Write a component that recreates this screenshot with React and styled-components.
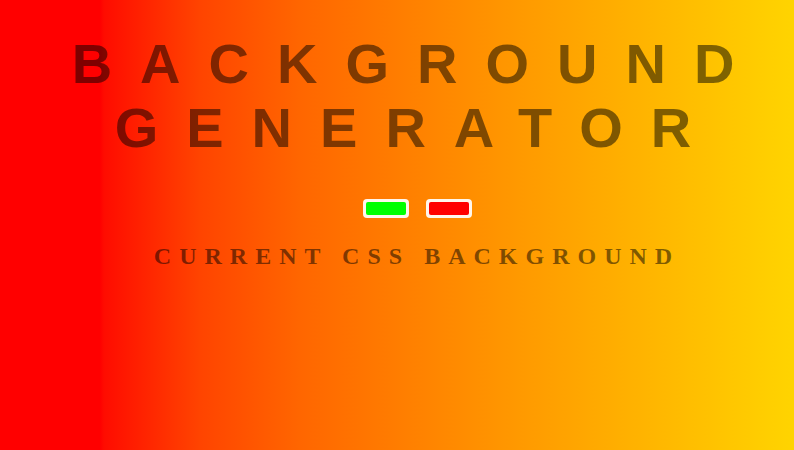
import styled, { createGlobalStyle } from "styled-components";

const GlobalStyle = createGlobalStyle`
  html, body {
    margin: 0;
    padding: 0;
  }
`;

const Page = styled.div`
  min-height: 100vh;
  box-sizing: border-box;
  padding: 32px 0 0 40px;
  display: flex;
  flex-direction: column;
  align-items: center;
  background: linear-gradient(
    to right,
    #ff0000 0px,
    #ff0000 100px,
    #ff0c00 104px,
    #ff4400 200px,
    #ff6600 300px,
    #ff9500 500px,
    #ffc000 700px,
    #ffd400 794px
  );
`;

const Title = styled.h1`
  margin: 0;
  font-family: "Liberation Sans", Arial, sans-serif;
  font-weight: 700;
  font-size: 56px;
  line-height: 64px;
  letter-spacing: 0.5em;
  text-align: center;
  text-transform: uppercase;
  color: rgba(0, 0, 0, 0.5);
`;

const Pickers = styled.div`
  display: flex;
  gap: 17px;
  margin-top: 39px;
`;

const Swatch = styled.button`
  width: 46px;
  height: 19px;
  padding: 3px;
  border: none;
  border-radius: 4px;
  background: #fff6ec;
  cursor: pointer;
  display: flex;
`;

const SwatchFill = styled.span`
  flex: 1;
  border-radius: 2px;
  background: ${(props) => props.color};
`;

const Subtitle = styled.h3`
  margin: 24px 0 0;
  font-family: "Liberation Serif", "Times New Roman", serif;
  font-weight: 700;
  font-size: 24px;
  line-height: 28px;
  letter-spacing: 8px;
  text-align: center;
  text-transform: uppercase;
  color: rgba(0, 0, 0, 0.5);
`;

const App = () => {
  return (
    <Page>
      <GlobalStyle />
      <Title>
        Background
        <br />
        Generator
      </Title>
      <Pickers>
        <Swatch aria-label="color 1">
          <SwatchFill color="#00ff00" />
        </Swatch>
        <Swatch aria-label="color 2">
          <SwatchFill color="#ff0000" />
        </Swatch>
      </Pickers>
      <Subtitle>Current CSS Background</Subtitle>
    </Page>
  );
};

export default App;
